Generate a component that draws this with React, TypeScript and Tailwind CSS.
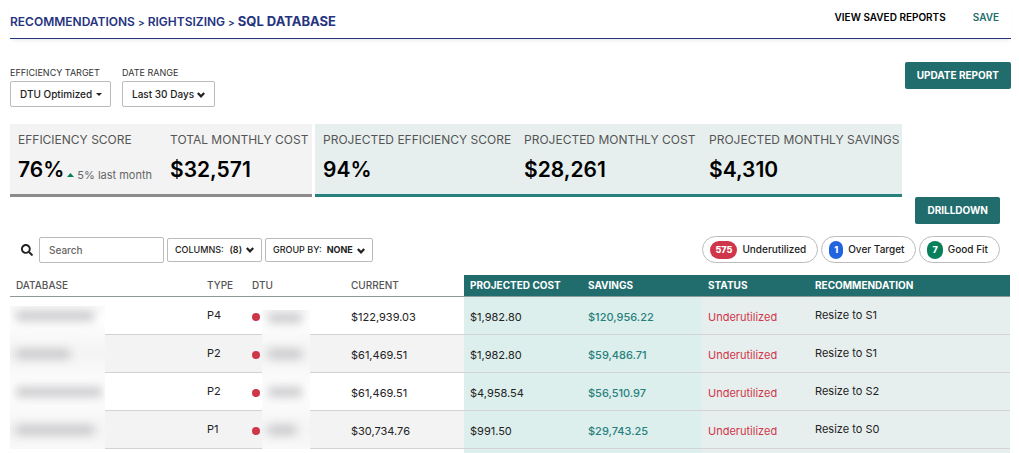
import { FC, ReactNode } from "react";
import { FaSearch } from "react-icons/fa";

type StatType = { label: string; value: string; trend?: string };

type RowType = {
  type: string;
  current: string;
  projected: string;
  savings: string;
  recommendation: string;
  nameWidth: string;
  dtuWidth: string;
};

const currentStats: StatType[] = [
  { label: "EFFICIENCY SCORE", value: "76%", trend: "5% last month" },
  { label: "TOTAL MONTHLY COST", value: "$32,571" },
];

const projectedStats: StatType[] = [
  { label: "PROJECTED EFFICIENCY SCORE", value: "94%" },
  { label: "PROJECTED MONTHLY COST", value: "$28,261" },
  { label: "PROJECTED MONTHLY SAVINGS", value: "$4,310" },
];

const filters = [
  { count: 575, label: "Underutilized", color: "bg-[#cf364a]" },
  { count: 1, label: "Over Target", color: "bg-[#2264e0]" },
  { count: 7, label: "Good Fit", color: "bg-[#087f5b]" },
];

const rows: RowType[] = [
  {
    type: "P4",
    current: "$122,939.03",
    projected: "$1,982.80",
    savings: "$120,956.22",
    recommendation: "Resize to S1",
    nameWidth: "w-[78px]",
    dtuWidth: "w-[34px]",
  },
  {
    type: "P2",
    current: "$61,469.51",
    projected: "$1,982.80",
    savings: "$59,486.71",
    recommendation: "Resize to S1",
    nameWidth: "w-[54px]",
    dtuWidth: "w-[34px]",
  },
  {
    type: "P2",
    current: "$61,469.51",
    projected: "$4,958.54",
    savings: "$56,510.97",
    recommendation: "Resize to S2",
    nameWidth: "w-[86px]",
    dtuWidth: "w-[34px]",
  },
  {
    type: "P1",
    current: "$30,734.76",
    projected: "$991.50",
    savings: "$29,743.25",
    recommendation: "Resize to S0",
    nameWidth: "w-[78px]",
    dtuWidth: "w-[28px]",
  },
];

const Chevron: FC = () => (
  <svg className="w-2 h-[6px] shrink-0" viewBox="0 0 8 6" fill="none">
    <path d="M.8 1 4 4.3 7.2 1" stroke="#222" strokeWidth="2.2" />
  </svg>
);

const Stat: FC<StatType> = ({ label, value, trend }) => (
  <div className="whitespace-nowrap">
    <p className="text-[12px] leading-4 text-[#555]">{label}</p>
    <div className="flex items-baseline mt-2">
      <span className="text-[21px] leading-7 font-semibold text-black">
        {value}
      </span>
      {trend && (
        <span className="flex items-center gap-[3px] ml-[3px] text-[11px] text-[#666]">
          <svg className="w-[7px] h-1" viewBox="0 0 7 4">
            <path d="M0 4 3.5 0 7 4z" fill="#087f5b" />
          </svg>
          {trend}
        </span>
      )}
    </div>
  </div>
);

const TealButton: FC<{ children: ReactNode }> = ({ children }) => (
  <button className="h-[27px] px-3 rounded-xs bg-[#216c6c] text-[10px] font-bold text-white whitespace-nowrap cursor-pointer">
    {children}
  </button>
);

// Blurred value that fades between the stripes of the rows around it
const Redacted: FC<{ odd: boolean; box: string; bar: string }> = ({
  odd,
  box,
  bar,
}) => (
  <div
    className={`absolute -bottom-px flex items-center overflow-hidden bg-linear-to-b from-[#f9f9f9] to-[#f9f9f9] ${
      odd ? "via-white" : "via-[#f4f4f4]"
    } ${box}`}
  >
    <div className={`h-[10px] ml-[6px] bg-[#c9c9cc] blur-[5px] ${bar}`} />
  </div>
);

const App: FC = () => {
  return (
    <main className="pl-[10px] pr-2 bg-white text-[#222] font-['Inter',sans-serif]">
      <header className="h-[39px] flex justify-between border-b border-[#263480] shadow-[0_3px_4px_-2px_rgba(0,0,0,0.1)]">
        <nav className="flex items-baseline gap-[3px] pt-[11px] text-[12px] leading-5 font-semibold text-[#263480] whitespace-nowrap">
          <a href="#recommendations">RECOMMENDATIONS</a>
          <span className="text-[10px]">&gt;</span>
          <a href="#rightsizing">RIGHTSIZING</a>
          <span className="text-[10px]">&gt;</span>
          <h1 className="text-[13px] font-bold">SQL DATABASE</h1>
        </nav>
        <div className="flex gap-[27px] pt-[7px] pr-3 text-[10px] leading-5 font-semibold whitespace-nowrap">
          <a href="#reports" className="text-black">
            VIEW SAVED REPORTS
          </a>
          <a href="#save" className="text-[#216c6c]">
            SAVE
          </a>
        </div>
      </header>

      {/* Report filters */}
      <section className="flex justify-between items-start pt-[23px]">
        <div className="flex gap-[11px]">
          <div>
            <label
              htmlFor="target"
              className="block pt-[2px] text-[9px] leading-[17px] text-[#333]"
            >
              EFFICIENCY TARGET
            </label>
            <div className="relative">
              <select
                id="target"
                className="block w-[101px] h-[26px] pl-[9px] appearance-none border border-[#bbb] rounded-xs text-[10px] font-medium"
              >
                <option>DTU Optimized</option>
              </select>
              <svg
                className="absolute right-[9px] top-3 w-[6px] h-[3px] pointer-events-none"
                viewBox="0 0 6 3"
              >
                <path d="M0 0h6L3 3z" fill="#222" />
              </svg>
            </div>
          </div>
          <div>
            <label
              htmlFor="range"
              className="block pt-[2px] text-[9px] leading-[17px] text-[#333]"
            >
              DATE RANGE
            </label>
            <div className="relative">
              <select
                id="range"
                className="block w-[93px] h-[26px] pl-[9px] appearance-none border border-[#bbb] rounded-xs text-[10px] font-medium"
              >
                <option>Last 30 Days</option>
              </select>
              <div className="absolute right-[10px] top-[11px] pointer-events-none">
                <Chevron />
              </div>
            </div>
          </div>
        </div>
        <TealButton>UPDATE REPORT</TealButton>
      </section>

      {/* Summary */}
      <section className="flex gap-[3px] mt-[17px]">
        <div className="w-[302px] h-[73px] grid grid-cols-[152px_1fr] pl-2 pt-2 bg-[#f3f3f3] border-b-3 border-[#8c8c8c]">
          {currentStats.map((stat) => (
            <Stat key={stat.label} {...stat} />
          ))}
        </div>
        <div className="w-[587px] h-[73px] grid grid-cols-[201px_185px_1fr] pl-2 pt-2 bg-[#e7efee] border-b-3 border-[#26807c]">
          {projectedStats.map((stat) => (
            <Stat key={stat.label} {...stat} />
          ))}
        </div>
      </section>

      <div className="flex justify-end pr-[11px]">
        <TealButton>DRILLDOWN</TealButton>
      </div>

      {/* Table toolbar */}
      <section className="flex justify-between items-center mt-3 pr-[11px]">
        <div className="flex items-center gap-[3px] pl-[11px]">
          <label htmlFor="search" className="mr-[3px]">
            <FaSearch className="text-[12px]" title="Search" />
          </label>
          <input
            id="search"
            type="text"
            placeholder="Search"
            className="w-[125px] h-[26px] px-[9px] border border-[#bbb] rounded-xs text-[10px] font-medium placeholder:text-[#666]"
          />
          <button className="w-[95px] h-6 px-[7px] flex items-center border border-[#bbb] rounded-xs text-[9px] font-medium whitespace-nowrap cursor-pointer">
            COLUMNS:
            <span className="ml-auto mr-1 font-semibold">(8)</span>
            <Chevron />
          </button>
          <div className="relative w-[108px] h-6 pl-[7px] flex items-center border border-[#bbb] rounded-xs text-[9px] whitespace-nowrap">
            <label htmlFor="group" className="font-medium">
              GROUP BY:
            </label>
            <select
              id="group"
              className="flex-1 pl-[5px] appearance-none font-bold"
            >
              <option>NONE</option>
            </select>
            <div className="absolute right-[7px] top-[9px] pointer-events-none">
              <Chevron />
            </div>
          </div>
        </div>
        <div className="flex gap-[3px]">
          {filters.map(({ count, label, color }) => (
            <button
              key={label}
              className="h-[27px] pl-[7px] pr-[11px] flex items-center gap-[5px] border border-[#bbb] rounded-full text-[10px] font-medium whitespace-nowrap cursor-pointer"
            >
              <span
                className={`h-[18px] px-[5px] rounded-full text-[9px] leading-[18px] font-extrabold text-white ${color}`}
              >
                {count}
              </span>
              {label}
            </button>
          ))}
        </div>
      </section>

      <div className="mt-3 pr-px">
        <table className="w-full table-fixed border-separate border-spacing-0 text-left text-[11px] whitespace-nowrap">
          <colgroup>
            <col className="w-[191px]" />
            <col className="w-[45px]" />
            <col className="w-[99px]" />
            <col className="w-[119px]" />
            <col className="w-[118px]" />
            <col className="w-[120px]" />
            <col className="w-[107px]" />
            <col />
          </colgroup>
          <thead>
            <tr className="h-[22px] *:px-[6px] *:border-b *:border-[#8c9a9a]">
              <th className="text-[10px] font-medium text-[#555]">DATABASE</th>
              <th className="text-[10px] font-medium text-[#555]">TYPE</th>
              <th className="text-[10px] font-medium text-[#555]">DTU</th>
              <th className="text-[10px] font-medium text-[#555]">CURRENT</th>
              <th className="bg-[#216c6c] text-[10px] font-bold text-white">
                PROJECTED COST
              </th>
              <th className="bg-[#216c6c] text-[10px] font-bold text-white">
                SAVINGS
              </th>
              <th className="bg-[#216c6c] text-[10px] font-bold text-white">
                STATUS
              </th>
              <th className="bg-[#216c6c] text-[10px] font-bold text-white">
                RECOMMENDATION
              </th>
            </tr>
          </thead>
          <tbody>
            {rows.map((row, index) => {
              const odd = index % 2 == 0;
              return (
                <tr
                  key={index}
                  className="h-[38px] even:bg-[#f3f3f3] *:px-[6px] *:border-b *:border-[#d3d3d3]"
                >
                  <td className="relative">
                    <Redacted
                      odd={odd}
                      box={
                        index == 0
                          ? "left-0 w-[95px] h-[29px] pb-[10px]"
                          : "left-0 w-[95px] h-[38px]"
                      }
                      bar={row.nameWidth}
                    />
                  </td>
                  <td>{row.type}</td>
                  <td className="relative pt-[3px]">
                    <div className="w-2 h-2 rounded-full bg-[#cf364a]" />
                    <Redacted
                      odd={odd}
                      box={
                        index == 0
                          ? "left-4 w-[48px] h-[25px] pb-[10px]"
                          : "left-4 w-[48px] h-[38px]"
                      }
                      bar={row.dtuWidth}
                    />
                  </td>
                  <td className="pt-[3px]">{row.current}</td>
                  <td className="pt-[3px] bg-[#ddefec]">{row.projected}</td>
                  <td className="pt-[3px] bg-[#ddefec] font-medium text-[#26807c]">
                    {row.savings}
                  </td>
                  <td className="pt-[3px] bg-[#e7efee] text-[#cf364a]">
                    Underutilized
                  </td>
                  <td className="bg-[#e7efee]">{row.recommendation}</td>
                </tr>
              );
            })}
            <tr className="h-1">
              <td colSpan={4} />
              <td colSpan={2} className="bg-[#ddefec]" />
              <td colSpan={2} className="bg-[#e7efee]" />
            </tr>
          </tbody>
        </table>
      </div>
    </main>
  );
};

export default App;
